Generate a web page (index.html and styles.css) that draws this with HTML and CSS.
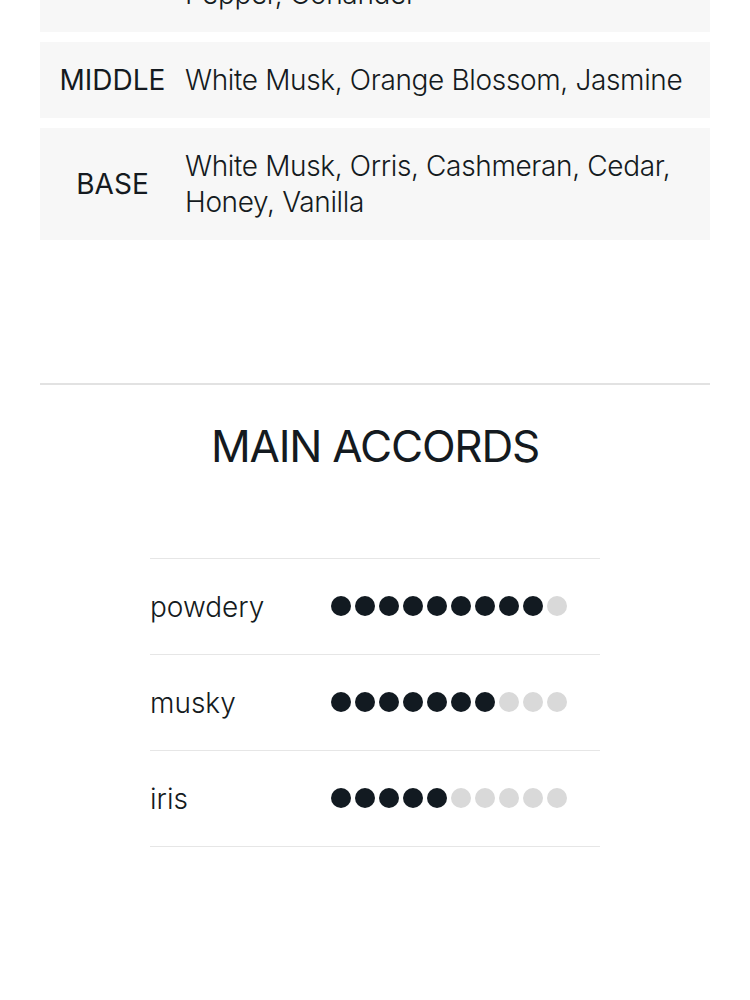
FILE: index.html
```html
<!DOCTYPE html>
<html lang="en">
<head>
<meta charset="utf-8">
<title>Notes</title>
<link rel="stylesheet" href="styles.css">
</head>
<body>
<main class="page">
  <section class="notes">
    <div class="note-row">
      <div class="note-label">TOP</div>
      <div class="note-list">Bergamot, Pink Pepper, Lemon, Black<br>Pepper, Coriander</div>
    </div>
    <div class="note-row">
      <div class="note-label">MIDDLE</div>
      <div class="note-list">White Musk, Orange Blossom, Jasmine</div>
    </div>
    <div class="note-row">
      <div class="note-label">BASE</div>
      <div class="note-list">White Musk, Orris, Cashmeran, Cedar, Honey, Vanilla</div>
    </div>
  </section>

  <hr class="divider">

  <h2 class="section-title">MAIN ACCORDS</h2>

  <div class="accords">
    <div class="accord-row">
      <div class="accord-name">powdery</div>
      <div class="dots">
        <span class="dot on"></span><span class="dot on"></span><span class="dot on"></span><span class="dot on"></span><span class="dot on"></span><span class="dot on"></span><span class="dot on"></span><span class="dot on"></span><span class="dot on"></span><span class="dot"></span>
      </div>
    </div>
    <div class="accord-row">
      <div class="accord-name">musky</div>
      <div class="dots">
        <span class="dot on"></span><span class="dot on"></span><span class="dot on"></span><span class="dot on"></span><span class="dot on"></span><span class="dot on"></span><span class="dot on"></span><span class="dot"></span><span class="dot"></span><span class="dot"></span>
      </div>
    </div>
    <div class="accord-row">
      <div class="accord-name">iris</div>
      <div class="dots">
        <span class="dot on"></span><span class="dot on"></span><span class="dot on"></span><span class="dot on"></span><span class="dot on"></span><span class="dot"></span><span class="dot"></span><span class="dot"></span><span class="dot"></span><span class="dot"></span>
      </div>
    </div>
  </div>
</main>
</body>
</html>
```

FILE: styles.css
```css
html, body {
  margin: 0;
  padding: 0;
  background: #ffffff;
}

body {
  font-family: Inter, "Noto Sans", sans-serif;
  color: #141a20;
}

.page {
  padding: 0 40px;
}

.notes {
  display: flex;
  flex-direction: column;
  gap: 10px;
  margin-top: -80px;
}

.note-row {
  display: grid;
  grid-template-columns: 145px 1fr;
  align-items: center;
  background: #f7f7f7;
  padding: 20px 0;
}

.note-label {
  text-align: center;
  font-size: 28px;
  line-height: 36px;
  font-weight: 400;
}

.note-list {
  font-size: 28px;
  line-height: 36px;
  font-weight: 300;
  letter-spacing: -0.35px;
  padding-right: 8px;
}

.divider {
  border: 0;
  border-top: 2px solid #e2e2e2;
  margin: 143px 0 0;
}

.section-title {
  margin: 0;
  padding-top: 35px;
  text-align: center;
  font-size: 44px;
  line-height: 52px;
  font-weight: 400;
  letter-spacing: -1.2px;
}

.accords {
  width: 450px;
  margin: 86px auto 0;
  border-top: 1px solid #e6e6e6;
}

.accord-row {
  display: flex;
  align-items: center;
  height: 95px;
  border-bottom: 1px solid #e6e6e6;
}

.accord-name {
  width: 181px;
  font-size: 28px;
  font-weight: 300;
}

.dots {
  display: flex;
  gap: 4px;
  margin-top: -2px;
}

.dot {
  width: 20px;
  height: 20px;
  border-radius: 50%;
  background: #d9d9d9;
}

.dot.on {
  background: #121a21;
}
```
